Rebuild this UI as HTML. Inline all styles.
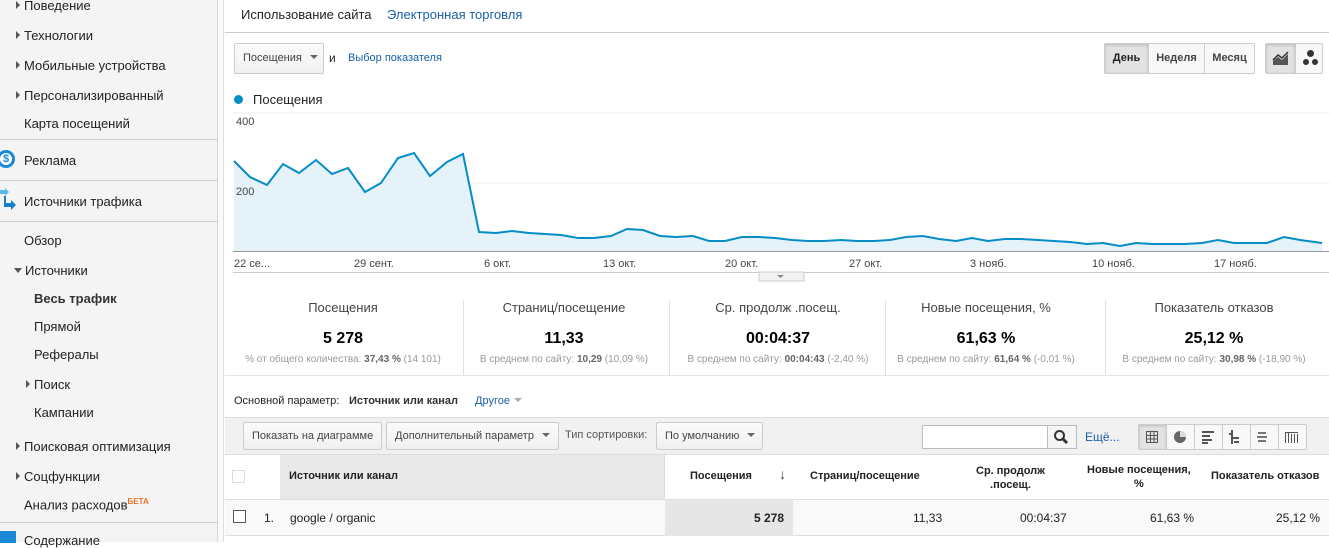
<!DOCTYPE html>
<html><head><meta charset="utf-8">
<style>
*{box-sizing:border-box;margin:0;padding:0}
body{width:1329px;height:542px;overflow:hidden;background:#fff;font-family:"Liberation Sans",Arial,sans-serif;font-size:13px;color:#222;position:relative}
.a{position:absolute;white-space:nowrap}
#side{position:absolute;left:0;top:0;width:218px;height:542px;background:#f4f4f4;border-right:1px solid #d6d6d6}
#side2{position:absolute;left:218px;top:0;width:6px;height:542px;background:#fafafa;border-right:1px solid #e0e0e0}
.tri{display:inline-block;width:0;height:0;border-top:4px solid transparent;border-bottom:4px solid transparent;border-left:4px solid #555;margin-right:4px;vertical-align:1px}
.trid{display:inline-block;width:0;height:0;border-left:4px solid transparent;border-right:4px solid transparent;border-top:5px solid #555;margin-right:3px;vertical-align:2px}
.hr{position:absolute;left:0;width:218px;height:1px;background:#d0d0d0}
.btn{position:absolute;border:1px solid #ccc;border-radius:2px;background:linear-gradient(#fbfbfb,#f0f0f0);font-size:12px;color:#444;padding-left:8px;line-height:28px}
.dd{display:inline-block;width:0;height:0;border-left:4px solid transparent;border-right:4px solid transparent;border-top:4px solid #666;vertical-align:2px;margin-left:8px}
.blue{color:#15c}
.card{position:absolute;top:300px;width:218px;text-align:center}
.card .t{font-size:13px;color:#444}
.card .v{font-size:16px;font-weight:bold;color:#000;margin-top:15px}
.card .s{font-size:10px;color:#999;margin-top:6px}
.card .s b{color:#666}
.vsep{position:absolute;top:300px;width:1px;height:76px;background:#e0e0e0}
</style></head><body>
<div id="side"></div><div id="side2"></div>
<div class="a" style="left:16px;top:-2px"><span class="tri"></span>Поведение</div>
<div class="a" style="left:16px;top:28px"><span class="tri"></span>Технологии</div>
<div class="a" style="left:16px;top:58px"><span class="tri"></span>Мобильные устройства</div>
<div class="a" style="left:16px;top:88px"><span class="tri"></span>Персонализированный</div>
<div class="a" style="left:24px;top:116px">Карта посещений</div>
<div class="hr" style="top:139px"></div>
<div class="a" style="left:-3px;top:150px;width:18px;height:18px;border-radius:50%;border:3px solid #1a8ad6;background:#fff;color:#1a8ad6;font-weight:bold;font-size:11px;text-align:center;line-height:12px">$</div>
<div class="a" style="left:24px;top:153px">Реклама</div>
<div class="hr" style="top:180px"></div>
<svg class="a" style="left:0;top:188px" width="18" height="22"><path d="M0 2h5v-2l4 4-4 4v-2H0z" fill="#5ab8e6"/><path d="M4 8h2v7h5v-3l5 5-5 5v-3H4z" fill="#1a7fc9"/></svg>
<div class="a" style="left:24px;top:194px">Источники трафика</div>
<div class="hr" style="top:221px"></div>
<div class="a" style="left:24px;top:233px">Обзор</div>
<div class="a" style="left:14px;top:263px"><span class="trid"></span>Источники</div>
<div class="a" style="left:34px;top:291px;font-weight:bold;color:#333">Весь трафик</div>
<div class="a" style="left:34px;top:319px">Прямой</div>
<div class="a" style="left:34px;top:347px">Рефералы</div>
<div class="a" style="left:26px;top:377px"><span class="tri"></span>Поиск</div>
<div class="a" style="left:34px;top:405px">Кампании</div>
<div class="a" style="left:16px;top:439px"><span class="tri"></span>Поисковая оптимизация</div>
<div class="a" style="left:16px;top:469px"><span class="tri"></span>Соцфункции</div>
<div class="a" style="left:24px;top:497px">Анализ расходов<sup style="color:#e8702a;font-size:8px;font-weight:bold">БЕТА</sup></div>
<div class="hr" style="top:522px"></div>
<div class="a" style="left:0;top:531px;width:16px;height:12px;background:#1a8ad6"></div>
<div class="a" style="left:24px;top:533px">Содержание</div>

<div class="a" style="left:241px;top:7px">Использование сайта</div>
<div class="a blue" style="left:387px;top:7px;color:#1c5fa8">Электронная торговля</div>
<div class="a" style="left:225px;top:32px;width:1104px;height:1px;background:#ccc"></div>
<div class="btn" style="left:234px;top:43px;width:90px;height:31px;line-height:29px;font-size:11px">Посещения<span class="dd"></span></div>
<div class="a" style="left:329px;top:51px;font-size:12px">и</div>
<div class="a" style="left:348px;top:52px;font-size:11px;color:#1c5fa8">Выбор показателя</div>
<div class="a" style="left:1104px;top:43px;width:151px;height:31px;border:1px solid #ccc;border-radius:2px;background:#f8f8f8;font-size:11px;font-weight:bold;color:#444">
<div class="a" style="left:0;top:0;width:43px;height:29px;background:#e2e2e2;box-shadow:inset 0 1px 3px #bbb;text-align:center;line-height:29px;color:#222">День</div>
<div class="a" style="left:43px;top:0;width:56px;height:29px;border-left:1px solid #ccc;text-align:center;line-height:29px">Неделя</div>
<div class="a" style="left:99px;top:0;width:50px;height:29px;border-left:1px solid #ccc;text-align:center;line-height:29px">Месяц</div></div>
<div class="a" style="left:1265px;top:43px;width:58px;height:31px;border:1px solid #ccc;border-radius:2px;background:#f8f8f8">
<div class="a" style="left:0;top:0;width:29px;height:29px;background:#e2e2e2;box-shadow:inset 0 1px 3px #bbb"></div>
<svg class="a" style="left:6px;top:7px" width="18" height="16"><path d="M1 14L1 10L6 6L10 9L16 3L16 14Z" fill="#555"/><path d="M1 9L6 4L10 7L16 1" stroke="#333" stroke-width="1.5" fill="none"/></svg>
<div class="a" style="left:29px;top:0;width:1px;height:29px;background:#ccc"></div>
<div class="a" style="left:37px;top:15px;width:6px;height:6px;border-radius:50%;background:#333"></div>
<div class="a" style="left:41px;top:6px;width:7px;height:7px;border-radius:50%;background:#333"></div>
<div class="a" style="left:46px;top:15px;width:6px;height:6px;border-radius:50%;background:#333"></div>
</div>
<div class="a" style="left:234px;top:95px;width:9px;height:9px;border-radius:50%;background:#058dc7"></div>
<div class="a" style="left:253px;top:92px;font-size:13px">Посещения</div>

<svg class="a" style="left:225px;top:105px" width="1104" height="180" viewBox="225 105 1104 180">
<line x1="233" y1="113" x2="1329" y2="113" stroke="#eee"/>
<line x1="233" y1="183" x2="1329" y2="183" stroke="#eee"/>
<polygon fill="#e5f2f9" points="234,251 234,161 250,177 267,185 283,164 299,173 316,160 332,174 348,168 365,192 381,183 398,158 414,153 430,176 447,162 463,154 479,232 496,233 512,231 529,233 545,234 561,235 578,238 594,238 611,236 627,229 643,230 660,236 676,237 693,236 709,241 725,241 742,237 759,237 775,238 792,240 808,241 824,241 841,240 857,241 874,241 890,240 906,237 923,236 939,239 956,241 972,238 988,241 1005,239 1021,239 1038,240 1054,241 1070,242 1087,244 1103,243 1120,246 1136,243 1152,244 1169,244 1185,244 1202,243 1218,240 1234,243 1251,243 1267,243 1284,237 1300,240 1322,243 1322,251"/>
<polyline fill="none" stroke="#058dc7" stroke-width="2" points="234,161 250,177 267,185 283,164 299,173 316,160 332,174 348,168 365,192 381,183 398,158 414,153 430,176 447,162 463,154 479,232 496,233 512,231 529,233 545,234 561,235 578,238 594,238 611,236 627,229 643,230 660,236 676,237 693,236 709,241 725,241 742,237 759,237 775,238 792,240 808,241 824,241 841,240 857,241 874,241 890,240 906,237 923,236 939,239 956,241 972,238 988,241 1005,239 1021,239 1038,240 1054,241 1070,242 1087,244 1103,243 1120,246 1136,243 1152,244 1169,244 1185,244 1202,243 1218,240 1234,243 1251,243 1267,243 1284,237 1300,240 1322,243"/>
<line x1="233" y1="251.5" x2="1329" y2="251.5" stroke="#999"/>
<line x1="233" y1="272.5" x2="1329" y2="272.5" stroke="#ccc"/>
<rect x="759" y="272" width="45" height="9" fill="#f2f2f2" stroke="#ccc"/>
<path d="M777 275h7l-3.5 3z" fill="#888"/>
<g font-family="Liberation Sans" font-size="11" fill="#444">
<text x="236" y="125">400</text><text x="236" y="195">200</text>
<text x="234" y="267">22 се...</text><text x="354" y="267">29 сент.</text><text x="484" y="267">6 окт.</text>
<text x="603" y="267">13 окт.</text><text x="725" y="267">20 окт.</text><text x="849" y="267">27 окт.</text>
<text x="970" y="267">3 нояб.</text><text x="1092" y="267">10 нояб.</text><text x="1214" y="267">17 нояб.</text>
</g></svg>

<div class="card" style="left:234px"><div class="t">Посещения</div><div class="v">5 278</div><div class="s">% от общего количества: <b>37,43 %</b> (14 101)</div></div>
<div class="vsep" style="left:463px"></div>
<div class="card" style="left:455px"><div class="t">Страниц/посещение</div><div class="v">11,33</div><div class="s">В среднем по сайту: <b>10,29</b> (10,09 %)</div></div>
<div class="vsep" style="left:669px"></div>
<div class="card" style="left:669px"><div class="t">Ср. продолж .посещ.</div><div class="v">00:04:37</div><div class="s">В среднем по сайту: <b>00:04:43</b> (-2,40 %)</div></div>
<div class="vsep" style="left:885px"></div>
<div class="card" style="left:877px"><div class="t">Новые посещения, %</div><div class="v">61,63 %</div><div class="s">В среднем по сайту: <b>61,64 %</b> (-0,01 %)</div></div>
<div class="vsep" style="left:1105px"></div>
<div class="card" style="left:1105px"><div class="t">Показатель отказов</div><div class="v">25,12 %</div><div class="s">В среднем по сайту: <b>30,98 %</b> (-18,90 %)</div></div>
<div class="a" style="left:225px;top:375px;width:1104px;height:1px;background:#e5e5e5"></div>

<div class="a" style="left:234px;top:395px;font-size:11px">Основной параметр:</div>
<div class="a" style="left:349px;top:395px;font-size:11px;font-weight:bold;color:#333">Источник или канал</div>
<div class="a" style="left:475px;top:395px;font-size:11px;color:#1c5fa8">Другое <span class="dd" style="margin-left:1px;border-top-color:#aaa"></span></div>
<div class="a" style="left:225px;top:417px;width:1104px;height:38px;background:#f1f1f1;border-top:1px solid #ddd;border-bottom:1px solid #ddd"></div>
<div class="btn" style="left:243px;top:422px;width:139px;height:28px;line-height:26px;font-size:11px">Показать на диаграмме</div>
<div class="btn" style="left:386px;top:422px;width:173px;height:28px;line-height:26px;font-size:11px">Дополнительный параметр<span class="dd"></span></div>
<div class="a" style="left:565px;top:429px;font-size:11px;color:#555">Тип сортировки:</div>
<div class="btn" style="left:656px;top:422px;width:107px;height:28px;line-height:26px;font-size:11px">По умолчанию<span class="dd"></span></div>
<div class="a" style="left:922px;top:425px;width:155px;height:24px;border:1px solid #bbb;background:#fff"></div>
<div class="a" style="left:1047px;top:425px;width:30px;height:24px;border:1px solid #bbb;background:#f5f5f5"></div>
<svg class="a" style="left:1053px;top:429px" width="16" height="16"><circle cx="6.5" cy="6.5" r="4.5" stroke="#333" stroke-width="2" fill="none"/><path d="M10 10l4 4" stroke="#333" stroke-width="3"/></svg>
<div class="a" style="left:1085px;top:430px;font-size:12px;color:#1c5fa8">Ещё...</div>
<div class="a" style="left:1138px;top:424px;width:169px;height:26px;border:1px solid #ccc;border-radius:2px;background:#f8f8f8"></div>
<div class="a" style="left:1139px;top:425px;width:27px;height:24px;background:#e2e2e2;box-shadow:inset 0 1px 2px #bbb"></div>
<svg class="a" style="left:1138px;top:424px" width="170" height="26">
<g stroke="#ccc"><line x1="28.5" y1="0" x2="28.5" y2="26"/><line x1="56.5" y1="0" x2="56.5" y2="26"/><line x1="84.5" y1="0" x2="84.5" y2="26"/><line x1="112.5" y1="0" x2="112.5" y2="26"/><line x1="140.5" y1="0" x2="140.5" y2="26"/></g>
<g stroke="#555" fill="none"><rect x="8.5" y="7.5" width="11" height="11"/><path d="M12.5 7.5v11M16 7.5v11M8.5 11.5h11M8.5 15h11"/></g>
<circle cx="42" cy="13" r="6" fill="#666"/><path d="M42 13V7A6 6 0 0 1 48 13Z" fill="#ddd"/>
<g fill="#555"><rect x="64" y="7" width="12" height="2"/><rect x="64" y="11" width="8" height="2"/><rect x="64" y="15" width="10" height="2"/><rect x="64" y="18" width="6" height="2"/></g>
<g stroke="#555" stroke-width="2"><path d="M94 6v14M91 10h3M94 14h7M96 18h5"/></g>
<g fill="#777"><rect x="120" y="8" width="8" height="2"/><rect x="119" y="12" width="10" height="2"/><rect x="120" y="16" width="8" height="2"/></g>
<g stroke="#555"><path d="M147.5 8v11M150.5 8v11M153.5 10v9M156.5 10v9M159.5 10v9M147 8.5h13"/></g>
</svg>

<div class="a" style="left:225px;top:455px;width:1104px;height:45px;border-bottom:1px solid #ddd"></div>
<div class="a" style="left:280px;top:455px;width:385px;height:44px;background:#e9e9e9;border-right:1px solid #ddd"></div>
<div class="a" style="left:232px;top:470px;width:13px;height:13px;border:1px solid #ddd;background:#fff"></div>
<div class="a" style="left:289px;top:470px;font-size:11px;font-weight:bold">Источник или канал</div>
<div class="a" style="left:690px;top:470px;font-size:11px;font-weight:bold">Посещения</div>
<div class="a" style="left:779px;top:466px;font-size:14px;color:#444">↓</div>
<div class="a" style="left:810px;top:470px;font-size:11px;font-weight:bold">Страниц/посещение</div>
<div class="a" style="left:976px;top:464px;font-size:11px;font-weight:bold;text-align:center;line-height:14px">Ср. продолж<br>.посещ.</div>
<div class="a" style="left:1087px;top:463px;font-size:11px;font-weight:bold;text-align:center;line-height:14px">Новые посещения,<br>%</div>
<div class="a" style="left:1211px;top:470px;font-size:11px;font-weight:bold">Показатель отказов</div>
<div class="a" style="left:225px;top:500px;width:1104px;height:36px;background:#f9f9f9;border-bottom:1px solid #ddd"></div>
<div class="a" style="left:665px;top:500px;width:128px;height:36px;background:#e6e6e6"></div>
<div class="a" style="left:233px;top:510px;width:13px;height:13px;border:1px solid #555;background:#fff"></div>
<div class="a" style="left:264px;top:511px;font-size:12px">1.</div>
<div class="a" style="left:290px;top:511px;font-size:12px">google / organic</div>
<div class="a" style="left:754px;top:511px;font-size:12px;font-weight:bold">5 278</div>
<div class="a" style="left:913px;top:511px;font-size:12px">11,33</div>
<div class="a" style="left:1020px;top:511px;font-size:12px">00:04:37</div>
<div class="a" style="left:1150px;top:511px;font-size:12px">61,63 %</div>
<div class="a" style="left:1276px;top:511px;font-size:12px">25,12 %</div>
</body></html>
